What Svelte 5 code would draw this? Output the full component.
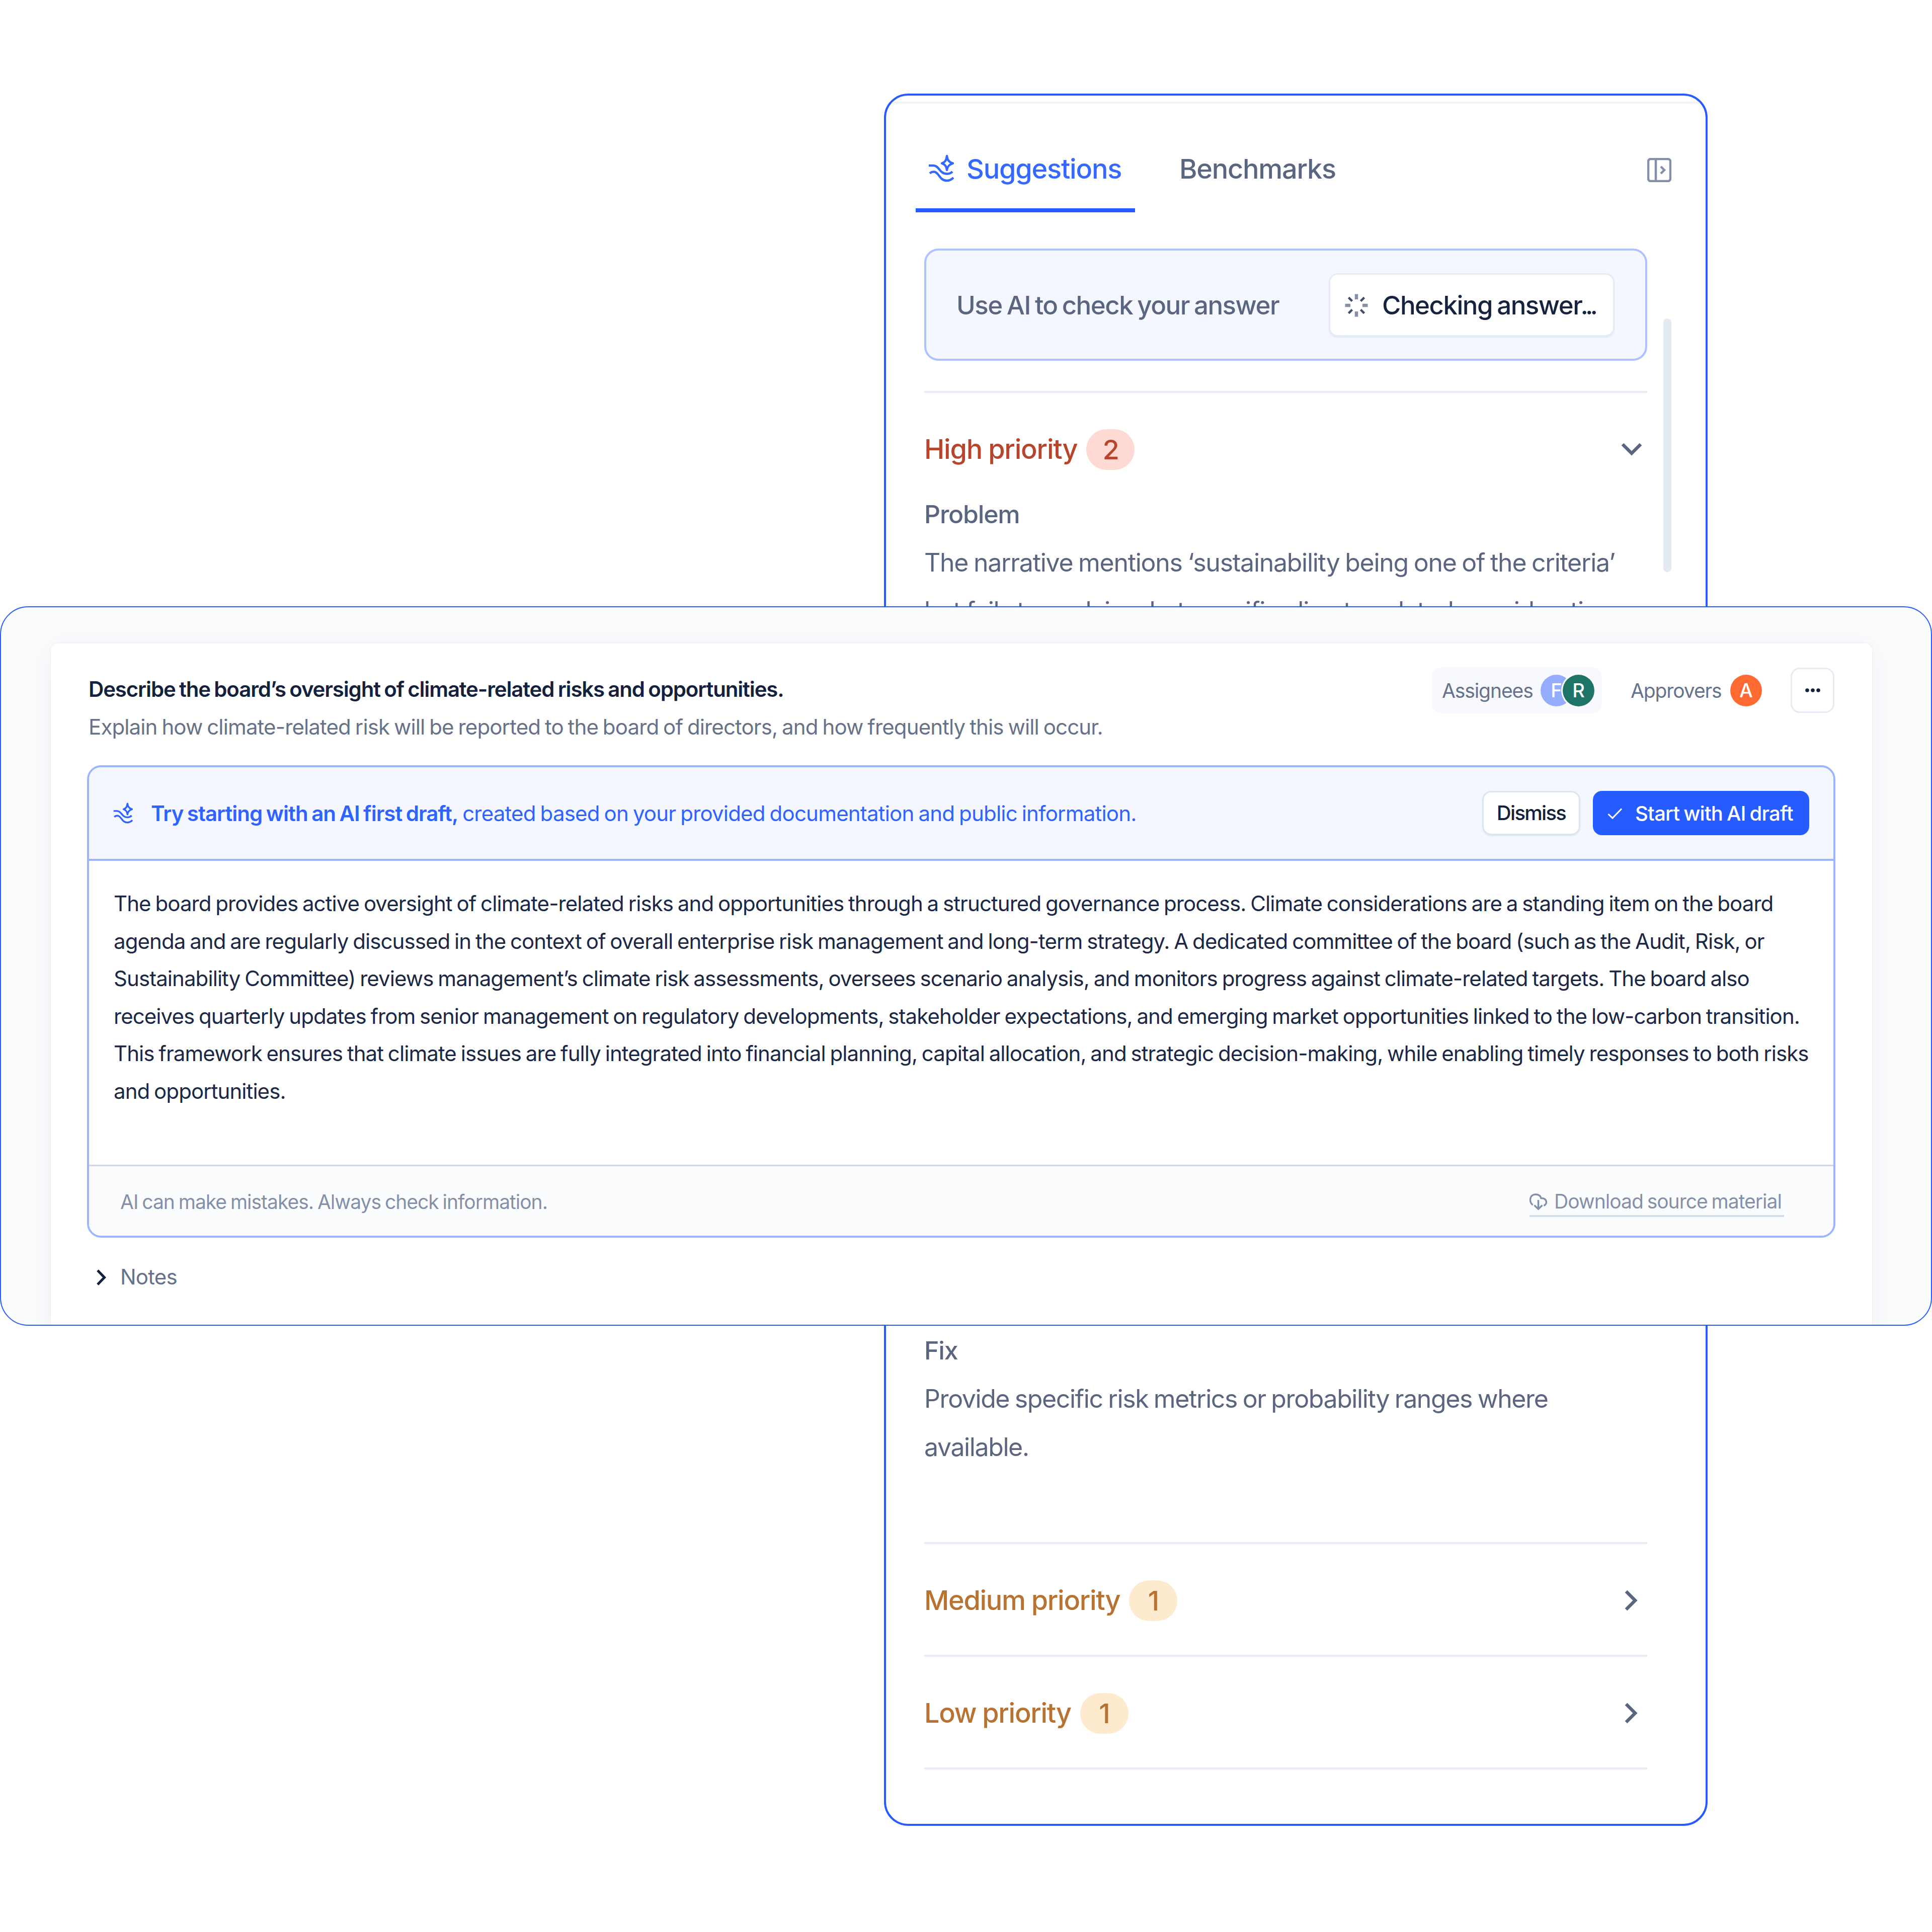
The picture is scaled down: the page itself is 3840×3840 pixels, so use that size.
<script lang="ts">
  interface Group {
    label: string;
    count: number;
  }

  const collapsed: Group[] = [
    { label: "Medium priority", count: 1 },
    { label: "Low priority", count: 1 },
  ];

  const answer: string[] = [
    "The board provides active oversight of climate-related risks and opportunities through a structured governance process. Climate considerations are a standing item on the board",
    "agenda and are regularly discussed in the context of overall enterprise risk management and long-term strategy. A dedicated committee of the board (such as the Audit, Risk, or",
    "Sustainability Committee) reviews management’s climate risk assessments, oversees scenario analysis, and monitors progress against climate-related targets. The board also",
    "receives quarterly updates from senior management on regulatory developments, stakeholder expectations, and emerging market opportunities linked to the low-carbon transition.",
    "This framework ensures that climate issues are fully integrated into financial planning, capital allocation, and strategic decision-making, while enabling timely responses to both risks",
    "and opportunities.",
  ];

  const rays = [0, 90, 180, 270];
</script>

{#snippet waves(size: number)}
  <svg width={size} height={size * 1.08} viewBox="0 0 51 55" fill="none" stroke="currentColor" stroke-width="4.500" stroke-linejoin="round">
    <path d="M37 3C38 11 41 15 49 17.500C41 20 38 24 37 31C36 24 34 20 27 17.500C34 15 36 11 37 3Z" />
    <path d="M1 22H10C22 22 22 38.500 37 38.500C42 38.500 45 37 48 34" />
    <path d="M3 37.500C6 34.500 9 34 12 34.500C22 36 22 52 37 52C42 52 46 50 50 46" />
  </svg>
{/snippet}

<main class="stage">
  <aside class="panel">
    <header class="tabs">
      <button type="button" class="tab active">
        {@render waves(51)}
        <span>Suggestions</span>
      </button>
      <button type="button" class="tab">Benchmarks</button>
      <svg class="collapse" width="48" height="48" viewBox="0 0 48 48" fill="none" stroke="currentColor" stroke-width="4.500">
        <rect x="2" y="2" width="44" height="44" rx="5" />
        <path d="M17 2V46" />
        <path d="M27 17L34 24L27 31" />
      </svg>
    </header>

    <div class="body">
      <div class="check">
        <span class="hint">Use AI to check your answer</span>
        <button type="button" class="checking">
          <svg width="46" height="48" viewBox="-23 -24 46 48">
            {#each rays as angle (angle)}
              <path class="ray" d="M0 -12V-22.500" transform="rotate({angle})" />
              <path class="ray slanted" d="M0 -12V-22" transform="rotate({angle + 45})" />
            {/each}
          </svg>
          <span>Checking answer<span class="dots">...</span></span>
        </button>
      </div>

      <section class="high">
        <div class="group">
          <span class="label">High priority</span>
          <span class="count">2</span>
          <svg class="down" width="42" height="26" viewBox="0 0 42 26" fill="none" stroke="currentColor" stroke-width="6.500">
            <path d="M3 3L21 21L39 3" />
          </svg>
        </div>
        <h3>Problem</h3>
        <p>The narrative mentions ‘sustainability being one of the criteria’</p>
        <p>but fails to explain what specific climate-related considerations</p>
      </section>

      <section class="fix">
        <h3>Fix</h3>
        <p>Provide specific risk metrics or probability ranges where</p>
        <p>available.</p>
      </section>

      <div class="rest">
        {#each collapsed as group (group.label)}
          <div class="group">
            <span class="label">{group.label}</span>
            <span class="count">{group.count}</span>
            <svg class="right" width="26" height="42" viewBox="0 0 26 42" fill="none" stroke="currentColor" stroke-width="6.500">
              <path d="M3 3L21 21L3 39" />
            </svg>
          </div>
        {/each}
      </div>
    </div>
    <div class="scrollbar"></div>
  </aside>

  <section class="window">
    <div class="sheet">
      <header class="question">
        <div class="titles">
          <h1>Describe the board’s oversight of climate-related risks and opportunities.</h1>
          <h2>Explain how climate-related risk will be reported to the board of directors, and how frequently this will occur.</h2>
        </div>
        <div class="assignees">
          <span>Assignees</span>
          <i class="avatar blue">F</i>
          <i class="avatar green">R</i>
        </div>
        <div class="approvers">
          <span>Approvers</span>
          <i class="avatar orange">A</i>
        </div>
        <button type="button" class="more" aria-label="More">
          <svg width="30" height="8" viewBox="0 0 30 8" fill="currentColor">
            <circle cx="4" cy="4" r="3.800" />
            <circle cx="15" cy="4" r="3.800" />
            <circle cx="26" cy="4" r="3.800" />
          </svg>
        </button>
      </header>

      <div class="editor">
        <div class="banner">
          {@render waves(39)}
          <p><strong>Try starting with an AI first draft,</strong> <span>created based on your provided documentation and public information.</span></p>
          <button type="button" class="dismiss">Dismiss</button>
          <button type="button" class="start">
            <svg width="30" height="22" viewBox="0 0 30 22" fill="none" stroke="currentColor" stroke-width="3">
              <path d="M1.500 12L10 20L28 1.500" />
            </svg>
            <span>Start with AI draft</span>
          </button>
        </div>
        <div class="answer">
          {#each answer as line (line)}
            <p>{line}</p>
          {/each}
        </div>
        <footer>
          <span class="note">AI can make mistakes. Always check information.</span>
          <span class="download">
            <svg width="36" height="34" viewBox="0 0 36 34" fill="none" stroke="currentColor" stroke-width="3.500">
              <path d="M6.500 23C-1.500 17 0 2 12 2C18 2 22 5 23 9.500C34 9 37 20 28.500 24.500" />
              <path d="M17.500 13V31M9.500 23.500L17.500 31L25.500 23.500" />
            </svg>
            <span>Download source material</span>
          </span>
        </footer>
      </div>

      <div class="notes">
        <svg width="19" height="32" viewBox="0 0 19 32" fill="none" stroke="currentColor" stroke-width="5">
          <path d="M2 2L15.500 16L2 30" />
        </svg>
        <span>Notes</span>
      </div>
    </div>
  </section>
</main>

<style>
  :global(body) {
    margin: 0;
    background: #fff;
  }

  .stage {
    position: relative;
    box-sizing: border-box;
    width: 3840px;
    height: 3840px;
    padding: 186px 0 0 1757px;
    overflow: hidden;
    font-family: Inter, "Liberation Sans", sans-serif;
    white-space: nowrap;
  }

  .stage :global(*) {
    box-sizing: border-box;
  }

  h1,
  h2,
  h3,
  p {
    margin: 0;
    font-size: inherit;
    font-weight: inherit;
  }

  button {
    padding: 0;
    border: 0;
    background: none;
    color: inherit;
    font: inherit;
    letter-spacing: inherit;
    word-spacing: inherit;
  }

  svg {
    display: block;
    flex: none;
  }

  /* Suggestions panel */

  .panel {
    position: relative;
    display: flex;
    flex-direction: column;
    width: 1637px;
    height: 3443px;
    border: 4px solid #265cff;
    border-radius: 48px;
    overflow: hidden;
    color: #5a667f;
  }

  .tabs {
    display: flex;
    flex: none;
    height: 220px;
    margin-top: 12px;
    padding: 0 68px 0 59px;
    border-top: 4px solid #eff2f7;
    font-size: 54px;
    font-weight: 500;
    letter-spacing: -1.200px;
  }

  .tab {
    display: flex;
    align-items: center;
    padding-top: 50px;
    border-bottom: 8px solid transparent;
  }

  .tab.active {
    width: 436px;
    margin-right: 88px;
    padding-left: 25px;
    gap: 25px;
    border-color: #265cff;
    color: #3568ff;
  }

  .collapse {
    margin: 108px 0 0 auto;
    color: #8490a8;
  }

  .body {
    display: flex;
    flex: 1;
    flex-direction: column;
    width: 1437px;
    margin-left: 76px;
    padding: 72px 0 108px;
    font-size: 50px;
    line-height: 96px;
    letter-spacing: -1.400px;
    word-spacing: -2px;
  }

  .check {
    display: flex;
    align-items: center;
    justify-content: space-between;
    height: 223px;
    margin-bottom: 60px;
    padding: 0 61px 0 60px;
    border: 4px solid #adc2ff;
    border-radius: 28px;
    background: #f4f7ff;
    font-size: 51px;
    font-weight: 500;
    word-spacing: -3px;
  }

  .hint {
    padding-top: 2px;
    letter-spacing: -1.500px;
  }

  .checking {
    display: flex;
    align-items: center;
    gap: 28px;
    width: 568px;
    height: 126px;
    padding: 2px 0 0 29px;
    border: 3px solid #e7ebf3;
    border-radius: 18px;
    background: #fff;
    box-shadow: 0 2px 3px #e2e7f1;
    letter-spacing: -1.500px;
  }

  .checking span {
    color: #16233f;
  }

  .ray {
    stroke: #8791a4;
    stroke-width: 6.500;
  }

  .ray.slanted {
    stroke: #404d68;
    stroke-width: 4.500;
  }

  .dots {
    margin-left: -3px;
    letter-spacing: -6px;
  }

  .high {
    border-top: 4px solid #e8ecf4;
  }

  .high p {
    letter-spacing: -1.280px;
  }

  .group {
    display: flex;
    align-items: center;
    font-size: 54px;
    font-weight: 500;
    letter-spacing: -1.200px;
    word-spacing: -1px;
  }

  .high .group {
    height: 162px;
    margin: 31px 0 0;
  }

  .high .label,
  .high .count {
    color: #b8452b;
  }

  .count {
    width: 96px;
    height: 81px;
    margin-left: 18px;
    border-radius: 41px;
    background: #ffdad4;
    line-height: 81px;
    text-align: center;
  }

  .down {
    margin: 0 10px 0 auto;
  }

  .right {
    margin: 0 19px 0 auto;
  }

  h3 {
    font-weight: 500;
    letter-spacing: -1.200px;
  }

  .fix {
    margin: auto 0 141px;
  }

  .rest {
    border-top: 4px solid #e8ecf4;
  }

  .rest .group {
    height: 224px;
    padding-top: 4px;
    border-bottom: 4px solid #e8ecf4;
    letter-spacing: -1.300px;
  }

  .rest .label,
  .rest .count {
    color: #b87333;
  }

  .rest .count {
    background: #fdeacf;
  }

  .scrollbar {
    position: absolute;
    top: 443px;
    right: 68px;
    width: 16px;
    height: 504px;
    border-radius: 8px;
    background: #e4e9f2;
  }

  /* Answer window, laid over the panel */

  .window {
    position: absolute;
    top: 1205px;
    left: 0;
    width: 3840px;
    height: 1430px;
    padding: 72px 117px 0 99px;
    border: 2px solid #265cff;
    border-radius: 56px;
    overflow: hidden;
    background: #fbfcfe;
    color: #667289;
    font-size: 42px;
    line-height: 74.600px;
    letter-spacing: -0.870px;
    word-spacing: -2.100px;
  }

  .sheet {
    height: 1400px;
    padding: 48px 73px 0 72px;
    border-radius: 14px;
    background: #fff;
    box-shadow: 0 0 6px rgba(20, 30, 60, 0.050), 0 6px 70px rgba(20, 30, 60, 0.050);
  }

  .question {
    display: flex;
    height: 194px;
    padding-right: 2px;
  }

  .titles {
    flex: 1;
    padding: 6px 0 0 3px;
  }

  h1 {
    color: #14213d;
    font-weight: 600;
    letter-spacing: -1.150px;
  }

  .assignees,
  .approvers {
    display: flex;
    align-items: center;
    height: 90px;
    font-size: 39px;
    letter-spacing: -1.100px;
  }

  .assignees {
    width: 338px;
    padding-left: 20px;
    border-radius: 18px;
    background: #f7f9fe;
  }

  .assignees span {
    width: 196px;
  }

  .approvers {
    width: 375px;
    padding-left: 57px;
  }

  .approvers span {
    width: 198px;
  }

  .assignees span,
  .approvers span {
    padding-top: 3px;
  }

  .avatar {
    width: 63px;
    height: 63px;
    border-radius: 50%;
    color: #fff;
    font-size: 38px;
    font-style: normal;
    font-weight: 500;
    line-height: 63px;
    letter-spacing: 0;
    text-align: center;
  }

  .blue {
    background: #94adff;
  }

  .green {
    margin-left: -19px;
    background: #1f7468;
    box-shadow: 0 0 0 3px #fff;
  }

  .orange {
    background: #ff6a33;
  }

  .more {
    display: grid;
    place-items: center;
    width: 87px;
    height: 90px;
    border: 3px solid #e7ebf3;
    border-radius: 18px;
    background: #fff;
    color: #14213d;
  }

  .editor {
    height: 939px;
    border: 4px solid #9db5ff;
    border-radius: 28px;
    overflow: hidden;
  }

  .banner {
    display: flex;
    align-items: center;
    height: 186px;
    padding: 0 48px;
    border-bottom: 4px solid #9db5ff;
    background: #f4f7ff;
    color: #2f63ff;
  }

  .banner p {
    flex: 1;
    padding: 2px 0 0 36px;
  }

  strong {
    font-weight: 600;
    letter-spacing: -1px;
  }

  .banner p span {
    letter-spacing: -0.800px;
  }

  .dismiss,
  .start {
    height: 88px;
    border-radius: 18px;
    font-size: 40px;
    font-weight: 500;
  }

  .dismiss {
    width: 195px;
    border: 3px solid #dfe5f0;
    background: #fff;
    box-shadow: 0 2px 3px #e2e7f1;
    color: #14213d;
    letter-spacing: -1.700px;
  }

  .start {
    display: flex;
    align-items: center;
    gap: 25px;
    width: 430px;
    margin-left: 25px;
    padding: 2px 0 0 29px;
    background: #265cff;
    color: #fff;
    letter-spacing: -0.750px;
  }

  .answer {
    height: 604px;
    padding: 48px 0 0 49px;
    color: #1b2845;
    letter-spacing: -0.930px;
  }

  footer {
    display: flex;
    align-items: center;
    justify-content: space-between;
    height: 141px;
    padding: 4px 98px 0 62px;
    border-top: 3px solid #ccd7ea;
    background: #fbfcfe;
    color: #8490a8;
    font-size: 39px;
    letter-spacing: -1px;
  }

  .download {
    display: flex;
    align-items: center;
    gap: 13px;
    width: 506px;
    height: 60px;
    padding-top: 3px;
    border-bottom: 4px solid #d5dde9;
  }

  .notes {
    display: flex;
    align-items: center;
    gap: 28px;
    height: 75px;
    margin-top: 41px;
    padding-left: 19px;
    letter-spacing: -0.800px;
  }

  .notes svg {
    color: #14213d;
  }
</style>
